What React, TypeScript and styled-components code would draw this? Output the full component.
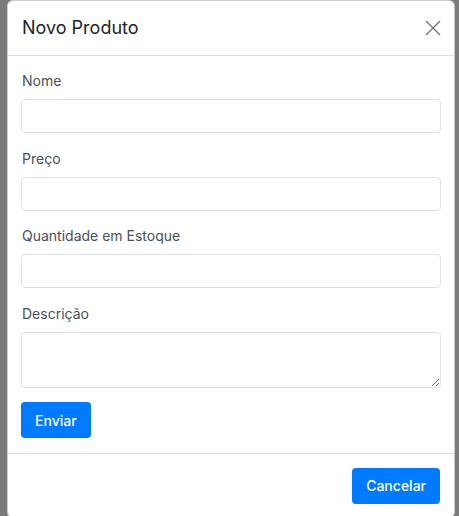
import React from "react";
import styled, { createGlobalStyle } from "styled-components";

const Global = createGlobalStyle`
  html, body { margin: 0; padding: 0; background: #7b7b7b; }
  body { font-family: Inter, "Noto Sans", sans-serif; overflow: hidden; }
  * { box-sizing: border-box; }
`;

const Page = styled.div`
  display: flex;
  padding-left: 7px;
  height: 516px;
`;

const Modal = styled.div`
  width: 448px;
  height: 518px;
  background: #fff;
  border: 1px solid rgba(0, 0, 0, 0.2);
  border-radius: 6px;
  display: flex;
  flex-direction: column;
  color: #212529;
`;

const Header = styled.div`
  display: flex;
  align-items: center;
  justify-content: space-between;
  padding: 14px 13px 15px 14px;
  border-bottom: 1px solid #dee2e6;
`;

const Title = styled.h5`
  margin: 0;
  font-size: 18px;
  font-weight: 400;
  line-height: 25px;
  color: #212529;
`;

const Close = styled.button`
  border: 0;
  background: transparent;
  padding: 0;
  width: 16px;
  height: 16px;
  display: flex;
  align-items: center;
  justify-content: center;
  cursor: pointer;
`;

const Body = styled.form`
  padding: 14px 13px 14.5px 13px;
  display: flex;
  flex-direction: column;
  border-bottom: 1px solid #dee2e6;
`;

const Group = styled.div`
  display: flex;
  flex-direction: column;
  margin-bottom: 14.5px;
`;

const Label = styled.label`
  font-size: 14px;
  line-height: 21px;
  color: #495057;
  margin-bottom: 8px;
  padding-left: 1px;
`;

const Input = styled.input`
  height: 34px;
  width: 100%;
  border: 1px solid #dee2e6;
  border-radius: 4px;
  font-family: inherit;
  font-size: 14px;
  padding: 6px 12px;
  outline: none;
`;

const TextArea = styled.textarea`
  height: 56px;
  width: 100%;
  border: 1px solid #dee2e6;
  border-radius: 4px;
  font-family: inherit;
  font-size: 14px;
  padding: 6px 12px;
  outline: none;
  display: block;
`;

const Button = styled.button`
  align-self: flex-start;
  height: 36px;
  padding: 0 14px;
  border: 0;
  border-radius: 4px;
  background: #007bff;
  color: #fff;
  font-family: inherit;
  font-size: 14px;
  font-weight: 500;
  cursor: pointer;
`;

const Footer = styled.div`
  display: flex;
  justify-content: flex-end;
  padding: 14px 14px 14px 14px;
`;

export default function App() {
  return (
    <>
      <Global />
      <Page>
        <Modal>
          <Header>
            <Title>Novo Produto</Title>
            <Close aria-label="Fechar">
              <svg width="16" height="16" viewBox="0 0 16 16">
                <path d="M1 1L15 15M15 1L1 15" stroke="#6c757d" strokeWidth="1.4" fill="none" />
              </svg>
            </Close>
          </Header>
          <Body onSubmit={(e) => e.preventDefault()}>
            <Group>
              <Label>Nome</Label>
              <Input type="text" />
            </Group>
            <Group>
              <Label>Preço</Label>
              <Input type="text" />
            </Group>
            <Group>
              <Label>Quantidade em Estoque</Label>
              <Input type="text" />
            </Group>
            <Group>
              <Label>Descrição</Label>
              <TextArea />
            </Group>
            <Button type="submit">Enviar</Button>
          </Body>
          <Footer>
            <Button type="button">Cancelar</Button>
          </Footer>
        </Modal>
      </Page>
    </>
  );
}
